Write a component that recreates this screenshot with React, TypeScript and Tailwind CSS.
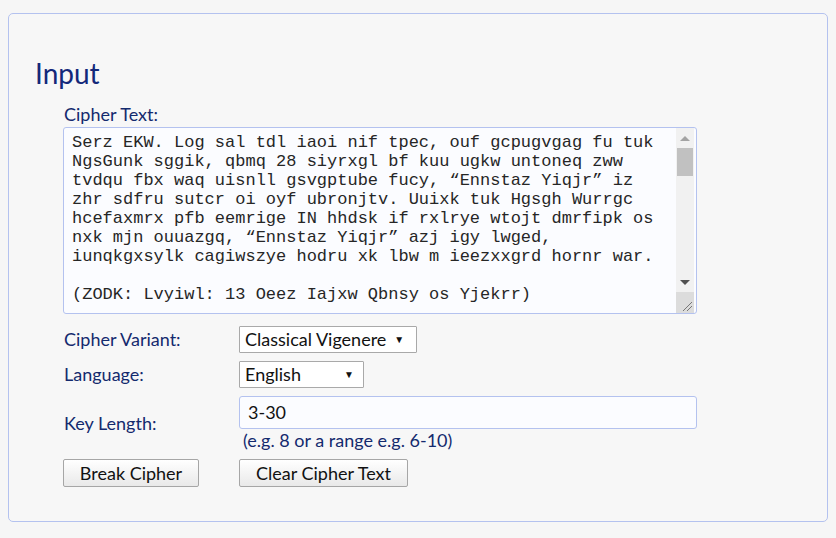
import React from "react";

const lines = [
  "Serz EKW. Log sal tdl iaoi nif tpec, ouf gcpugvgag fu tuk",
  "NgsGunk sggik, qbmq 28 siyrxgl bf kuu ugkw untoneq zww",
  "tvdqu fbx waq uisnll gsvgptube fucy, \u201CEnnstaz Yiqjr\u201D iz",
  "zhr sdfru sutcr oi oyf ubronjtv. Uuixk tuk Hgsgh Wurrgc",
  "hcefaxmrx pfb eemrige IN hhdsk if rxlrye wtojt dmrfipk os",
  "nxk mjn ouuazgq, \u201CEnnstaz Yiqjr\u201D azj igy lwged,",
  "iunqkgxsylk cagiwszye hodru xk lbw m ieezxxgrd hornr war.",
  "\u00A0",
  "(ZODK: Lvyiwl: 13 Oeez Iajxw Qbnsy os Yjekrr)",
];

const sans = "font-['Source_Sans_Pro','Lato','Noto_Sans',sans-serif]";

function Select({ label, width, gap }: { label: string; width: string; gap: string }) {
  return (
    <div
      className={`flex items-center h-[27px] ${width} border border-[#a9a9a9] bg-white rounded-[1px] pl-[5px] pr-[6px] text-[18px] text-[#111]`}
    >
      <span>{label}</span>
      <span className={`text-[10px] ${gap}`}>▼</span>
    </div>
  );
}

function Button({ label, width }: { label: string; width: string }) {
  return (
    <div
      className={`flex items-center justify-center h-[28px] ${width} border border-[#a6a6a6] rounded-[2px] bg-gradient-to-b from-[#ffffff] to-[#e9e9e9] text-[18px] text-[#111]`}
    >
      {label}
    </div>
  );
}

export default function App() {
  return (
    <div className={`w-[836px] h-[538px] bg-[#f6f6f6] pt-[13px] px-[8px] ${sans}`}>
      <div className="h-[509px] border border-[#b4c2ef] rounded-[5px] bg-[#f7f7f7] pt-[41px]">
        <h1 className="pl-[26px] text-[28px] leading-[36px] text-[#13287a]">Input</h1>
        <div className="ml-[54px] w-[634px] mt-[12px]">
          <div className="text-[18px] leading-[22px] text-[#142a6e] pl-[1px]">Cipher Text:</div>
          <div className="mt-[2px] h-[187px] border border-[#b4c2ef] rounded-[3px] bg-[#fbfcff] flex overflow-hidden">
            <div className="flex-1 pt-[5px] pl-[8px] font-['Liberation_Mono','Courier_New',monospace] text-[17px] leading-[19px] text-[#262626] whitespace-pre">
              {lines.map((l, i) => (
                <div key={i}>{l}</div>
              ))}
            </div>
            <div className="w-[18px] mr-[2px] bg-[#f1f1f1] flex flex-col">
              <div className="h-[20px] flex items-center justify-center">
                <div className="w-0 h-0 border-l-[5px] border-r-[5px] border-b-[5px] border-l-transparent border-r-transparent border-b-[#a3a3a3]" />
              </div>
              <div className="h-[28px] mx-[1px] bg-[#c1c1c1]" />
              <div className="flex-1" />
              <div className="h-[20px] flex items-center justify-center">
                <div className="w-0 h-0 border-l-[5px] border-r-[5px] border-t-[5px] border-l-transparent border-r-transparent border-t-[#505050]" />
              </div>
              <div className="h-[21px] bg-[#dcdcdc] relative">
                <svg className="absolute right-[1px] bottom-[1px]" width="12" height="12" viewBox="0 0 12 12">
                  <line x1="11" y1="2" x2="2" y2="11" stroke="#777" strokeWidth="1" />
                  <line x1="11" y1="6" x2="6" y2="11" stroke="#777" strokeWidth="1" />
                </svg>
              </div>
            </div>
          </div>

          <div className="grid grid-cols-[176px_1fr] mt-[12px] text-[18px] text-[#142a6e]">
            <div className="flex items-center h-[27px] pl-[1px]">Cipher Variant:</div>
            <div>
              <Select label="Classical Vigenere" width="w-[178px]" gap="ml-[8px]" />
            </div>

            <div className="flex items-center h-[27px] mt-[8px] pl-[1px]">Language:</div>
            <div className="mt-[8px]">
              <Select label="English" width="w-[125px]" gap="ml-auto mr-[3px]" />
            </div>

            <div className="flex items-center mt-[8px] pl-[1px]">Key Length:</div>
            <div className="mt-[8px]">
              <div className="h-[33px] border border-[#b4c2ef] rounded-[3px] bg-[#fbfcff] flex items-center pl-[8px] text-[#111]">
                3-30
              </div>
              <div className="pl-[4px] leading-[22px]">(e.g. 8 or a range e.g. 6-10)</div>
            </div>

            <div className="mt-[8px]">
              <Button label="Break Cipher" width="w-[136px]" />
            </div>
            <div className="mt-[8px]">
              <Button label="Clear Cipher Text" width="w-[169px]" />
            </div>
          </div>
        </div>
      </div>
    </div>
  );
}
